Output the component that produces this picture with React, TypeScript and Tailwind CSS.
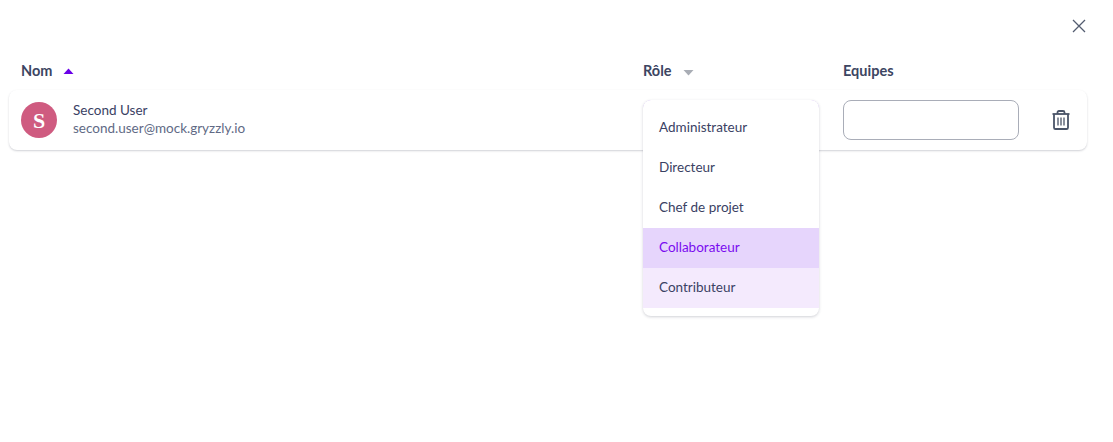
import React from "react";

const roles = [
  { label: "Administrateur", className: "text-[#3a4163]" },
  { label: "Directeur", className: "text-[#3a4163]" },
  { label: "Chef de projet", className: "text-[#3a4163]" },
  { label: "Collaborateur", className: "bg-[#e6d5fc] text-[#7a0bf0]" },
  { label: "Contributeur", className: "bg-[#f4eafd] text-[#3a4163]" },
];

const CloseIcon = () => (
  <svg width="14" height="14" viewBox="0 0 14 14" fill="none" stroke="#535c70" strokeWidth="1.3">
    <path d="M1 1l12 12M13 1L1 13" />
  </svg>
);

const TrashIcon = () => (
  <svg width="18" height="20" viewBox="0 0 18 20" fill="none" stroke="#4a5468" strokeWidth="1.8">
    <path d="M0.5 4h17" />
    <path d="M5.5 4V2.4C5.5 1.5 6.1 1 6.9 1h4.2c.8 0 1.4.5 1.4 1.4V4" />
    <path d="M2 4v13.4c0 .9.6 1.6 1.5 1.6h11c.9 0 1.5-.7 1.5-1.6V4" />
    <path d="M6 7.5v8M9 7.5v8M12 7.5v8" strokeWidth="1.3" />
  </svg>
);

const SortArrow = ({ up }: { up: boolean }) => (
  <svg
    width="11"
    height="7"
    viewBox="0 0 11 7"
    fill={up ? "#6a00e8" : "#a9adb5"}
    className={up ? "" : "mt-[2px]"}
  >
    {up ? <path d="M5.5 0.5L10.5 6H0.5z" /> : <path d="M0.5 1h10L5.5 6.5z" />}
  </svg>
);

export default function App() {
  return (
    <div className="w-[1113px] h-[442px] bg-white overflow-hidden text-[#3a4163] font-['Lato',sans-serif]">
      <div className="flex justify-end pt-[19px] pr-[27px] h-[33px]">
        <CloseIcon />
      </div>

      <div className="flex items-center h-[20px] mt-[28px] pl-[21px] text-[14.5px] font-bold text-[#3c4562]">
        <div className="w-[622px] flex items-center gap-[11px]">
          <span>Nom</span>
          <SortArrow up />
        </div>
        <div className="w-[200px] flex items-center gap-[11px]">
          <span>Rôle</span>
          <SortArrow up={false} />
        </div>
        <span>Equipes</span>
      </div>

      <div className="relative flex items-center w-[1078px] h-[60px] ml-[9px] mt-[9px] pl-[12px] bg-white rounded-lg shadow-[0_1px_2px_rgba(40,45,70,0.22)]">
        <div className="w-[36px] h-[36px] rounded-full bg-[#cf5b80] flex items-center justify-center text-white text-[22px] font-bold font-['Liberation_Serif',serif]">
          S
        </div>
        <div className="w-[570px] ml-[16px] pb-[2px]">
          <div className="text-[13.5px] leading-[18px] text-[#3a4163]">Second User</div>
          <div className="text-[13.5px] leading-[18px] text-[#616a85]">second.user@mock.gryzzly.io</div>
        </div>
        <div className="w-[176px] h-[40px] rounded-lg border border-[#c9a6fa]" />
        <div className="w-[176px] h-[40px] ml-[24px] rounded-lg border border-[#a9adb8] bg-white" />
        <div className="ml-[33px] flex">
          <TrashIcon />
        </div>

        <ul className="absolute left-[634px] top-[10px] w-[176px] h-[216px] py-[8px] bg-white rounded-lg shadow-[0_1px_3px_rgba(40,45,70,0.22)] overflow-hidden">
          {roles.map((role) => (
            <li key={role.label} className={`h-[40px] flex items-center pl-[16px] pb-[2px] text-[13.5px] ${role.className}`}>
              {role.label}
            </li>
          ))}
        </ul>
      </div>
    </div>
  );
}
